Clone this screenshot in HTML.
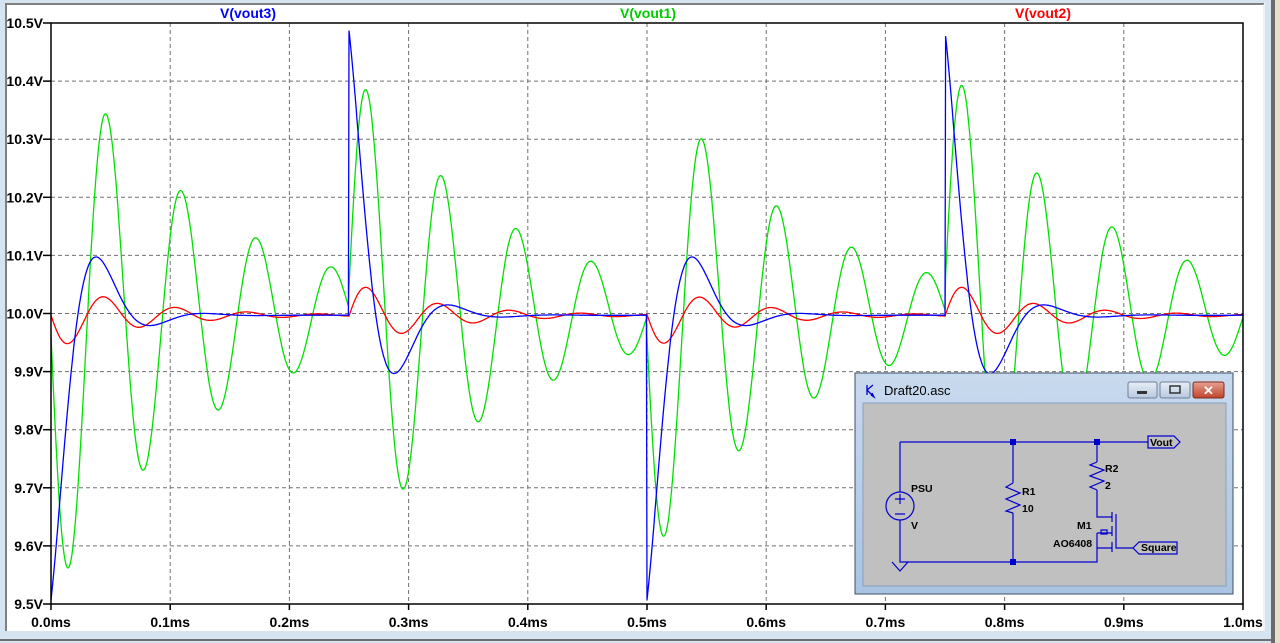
<!DOCTYPE html>
<html><head><meta charset="utf-8"><style>
html,body{margin:0;padding:0;width:1280px;height:643px;overflow:hidden;background:#d6e3f0;font-family:"Liberation Sans",sans-serif}
svg{position:absolute;left:0;top:0}
</style></head><body>
<svg width="1280" height="643" xmlns="http://www.w3.org/2000/svg" font-family="Liberation Sans, sans-serif">
<rect x="0" y="0" width="1280" height="643" fill="#d6e3f0"/>
<rect x="1271" y="0" width="4" height="643" fill="#6b6b6b"/>
<rect x="1275" y="0" width="5" height="643" fill="#e8e0c8"/>
<rect x="5" y="3" width="1260" height="628" fill="#fff"/>
<line x1="5" y1="4" x2="1264" y2="4" stroke="#808080" stroke-width="2"/>
<line x1="6" y1="3" x2="6" y2="631" stroke="#808080" stroke-width="2"/>
<line x1="1264" y1="4" x2="1264" y2="631" stroke="#e6e6e6" stroke-width="1"/>
<line x1="0" y1="640" x2="1271" y2="640" stroke="#707070" stroke-width="2"/>
<g id="grid" stroke="#707070" stroke-width="1" stroke-dasharray="4,3"></g>
<g id="ticks" stroke="#000" stroke-width="1.5"></g>
<g id="lbl" font-size="14" font-weight="bold" fill="#000"></g>
<text x="248" y="18" font-size="14" font-weight="bold" fill="#0000ff" text-anchor="middle">V(vout3)</text>
<text x="648" y="18" font-size="14" font-weight="bold" fill="#00cc00" text-anchor="middle">V(vout1)</text>
<text x="1043" y="18" font-size="14" font-weight="bold" fill="#ff0000" text-anchor="middle">V(vout2)</text>
<g id="curves" fill="none" stroke-width="1.3"></g>
<rect x="51" y="23" width="1192" height="581" fill="none" stroke="#000" stroke-width="1.5"/>
<defs><linearGradient id="tb" x1="0" y1="0" x2="0" y2="1"><stop offset="0" stop-color="#c9daee"/><stop offset="1" stop-color="#a9c3e2"/></linearGradient>
<linearGradient id="bt" x1="0" y1="0" x2="0" y2="1"><stop offset="0" stop-color="#e8eef6"/><stop offset="1" stop-color="#b7c8de"/></linearGradient>
<linearGradient id="cl" x1="0" y1="0" x2="0" y2="1"><stop offset="0" stop-color="#e7a090"/><stop offset="1" stop-color="#c0442c"/></linearGradient></defs>
<rect x="855" y="373" width="378" height="221" fill="url(#tb)" stroke="#3c4e66" stroke-width="1"/>
<rect x="863" y="403" width="363" height="183" fill="#c0c0c0" stroke="#8aa0bb" stroke-width="1"/>
<text x="884" y="395" font-size="13" fill="#000">Draft20.asc</text>
<g stroke="#0000cc" stroke-width="1.3" fill="none"><line x1="867" y1="385" x2="867" y2="395"/><path d="M867 390 L873 385 M867 390 L874 397 M871 395 L874 397 L872 393"/></g>
<rect x="1128" y="382" width="29" height="16" rx="2" fill="url(#bt)" stroke="#6d7f98"/>
<rect x="1137" y="391" width="10" height="3" fill="#333"/>
<rect x="1160" y="382" width="30" height="16" rx="2" fill="url(#bt)" stroke="#6d7f98"/>
<rect x="1170" y="386" width="10" height="7" fill="none" stroke="#333" stroke-width="1.5"/>
<rect x="1193" y="382" width="31" height="16" rx="2" fill="url(#cl)" stroke="#7a2d20"/>
<text x="1208.5" y="395" font-size="13" font-weight="bold" fill="#fff" text-anchor="middle">✕</text>
<g stroke="#0000cc" stroke-width="1.2" fill="none">
<path d="M900 442 H1148 M900 442 V492 M900 520 V562 H1097 V548 H1112 M1013 442 V483 M1013 513 V562 M1097 442 V462 M1097 490 V517 H1112"/>
<circle cx="900" cy="506" r="14"/>
<path d="M895 499 H905 M900 494 V504 M895 514 H905"/>
<path d="M892 562 L900 571 L908 562"/>
<path d="M1013 483 L1006 487 L1020 493 L1006 499 L1020 505 L1006 511 L1013 513"/>
<path d="M1097 462 L1090 465 L1104 470 L1090 476 L1104 481 L1090 487 L1097 490"/>
<path d="M1112 512 V522 M1112 526 V536 M1112 542 V552 M1116 514 V548 H1133"/>
<path d="M1097 533 H1112 M1097 533 V548 M1101 530 H1107 V534 H1101 Z"/>
<path d="M1148 436 H1174 L1180 442 L1174 448 H1148 Z"/>
<path d="M1133 548 L1139 542 H1177 V554 H1139 Z"/>
</g>
<g fill="#0000cc"><rect x="1010" y="439" width="6" height="6"/><rect x="1094" y="439" width="6" height="6"/><rect x="1010" y="559" width="6" height="6"/></g>
<g font-size="10.5" font-weight="bold" fill="#000">
<text x="911" y="492">PSU</text><text x="911" y="529">V</text>
<text x="1022" y="495">R1</text><text x="1022" y="512">10</text>
<text x="1105" y="472">R2</text><text x="1105" y="489">2</text>
<text x="1077" y="529">M1</text><text x="1053" y="547">AO6408</text>
<text x="1150" y="446">Vout</text><text x="1141" y="551">Square</text>
</g>
</svg>
<script>
var X=function(t){return 51+t*1192}, Y=function(v){return 23+(10.5-v)*581};
var ns="http://www.w3.org/2000/svg";
function el(p,n,a){var e=document.createElementNS(ns,n);for(var k in a)e.setAttribute(k,a[k]);document.getElementById(p).appendChild(e);return e;}
for(var i=1;i<10;i++){el("grid","line",{x1:X(i/10),y1:23,x2:X(i/10),y2:604});}
for(var i=1;i<10;i++){el("grid","line",{x1:51,y1:Y(9.5+i/10),x2:1243,y2:Y(9.5+i/10)});}
for(var i=0;i<=10;i++){el("ticks","line",{x1:X(i/10),y1:604,x2:X(i/10),y2:610});
 var t=el("lbl","text",{x:X(i/10),y:627,"text-anchor":"middle"});t.textContent=(i/10).toFixed(1)+"ms";}
for(var i=0;i<=10;i++){var v=9.5+i/10;el("ticks","line",{x1:43,y1:Y(v),x2:51,y2:Y(v)});
 var t=el("lbl","text",{x:43,y:Y(v)+5,"text-anchor":"end"});t.textContent=v.toFixed(1)+"V";}
var ev=[[0,-1],[0.25,1],[0.5,-1],[0.75,1]];
function g(t){var s=10;ev.forEach(function(e){var d=t-e[0];if(d>=0){var a=e[1]>0?0.5:0.49;s+=e[1]*a*Math.exp(-d/0.13)*Math.cos(2*Math.PI*(d-0.015)/0.063);}});return s;}
function b(t){var s=9.997;ev.forEach(function(e){var d=t-e[0];if(d>=0){s+=e[1]*0.49*Math.exp(-d/0.026)*Math.cos(2*Math.PI*d/0.09);}});return s;}
function r(t){var s=9.997;ev.forEach(function(e){var d=t-e[0];if(d>=0){s+=e[1]*0.06*Math.exp(-d/0.07)*Math.sin(2*Math.PI*d/0.06);}});return s;}
function path(f,c){var d="";for(var t=0;t<=1.0001;t+=0.0005){var v=Math.max(9.5,Math.min(10.5,f(t)));d+=(d?"L":"M")+X(t).toFixed(1)+" "+Y(v).toFixed(1);}
 el("curves","path",{d:d,stroke:c});}
path(g,"#00e000");path(r,"#ff0000");path(b,"#0000ff");
</script>
</body></html>
